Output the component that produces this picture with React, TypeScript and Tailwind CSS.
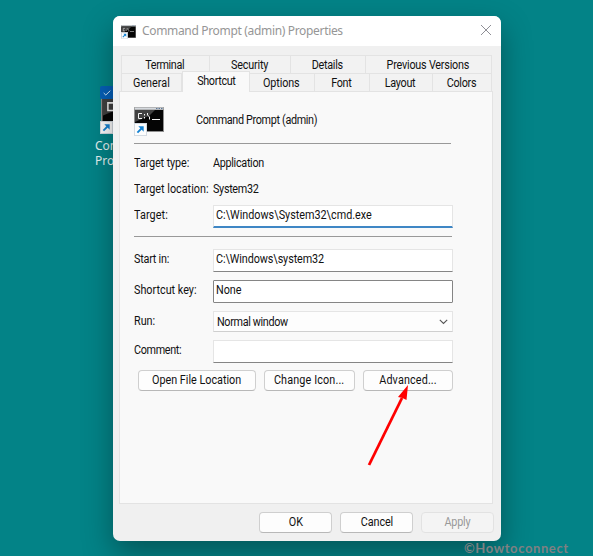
import type { ReactNode } from 'react';
import clsx from 'clsx';

type TabItem = { label: string; width: string; tracking: string };

const upperTabs: TabItem[] = [
  { label: 'Terminal', width: 'w-[88px]', tracking: 'tracking-[-0.38px]' },
  { label: 'Security', width: 'w-[81px]', tracking: 'tracking-[-0.2px]' },
  { label: 'Details', width: 'w-[75px]', tracking: 'tracking-[-0.3px]' },
  { label: 'Previous Versions', width: 'w-[126px]', tracking: 'tracking-[-0.24px]' },
];

const lowerTabs: TabItem[] = [
  { label: 'General', width: 'w-[60px]', tracking: 'tracking-normal' },
  { label: 'Shortcut', width: 'w-[68px]', tracking: 'tracking-[-0.38px]' },
  { label: 'Options', width: 'w-[65px]', tracking: 'tracking-[-0.15px]' },
  { label: 'Font', width: 'w-[55px]', tracking: 'tracking-[-0.35px]' },
  { label: 'Layout', width: 'w-[63px]', tracking: 'tracking-[-0.3px]' },
  { label: 'Colors', width: 'w-[59px]', tracking: 'tracking-[-0.3px]' },
];

// Slightly condensed interface text
function Text({ className, center, children }: { className?: string; center?: boolean; children: ReactNode }) {
  return (
    <span className={clsx('inline-block scale-x-90', center ? 'origin-center' : 'origin-left', className)}>
      {children}
    </span>
  );
}

function ShortcutArrow({ className }: { className?: string }) {
  return (
    <svg viewBox="0 0 13 13" className={className}>
      <rect x="0.5" y="0.5" width="12" height="12" fill="#fdfdfd" stroke="#d4dbe2" />
      <path d="M3.400 9.600 8 5" fill="none" stroke="#1482d2" strokeWidth="1.9" />
      <path d="M4.300 3.300h5.400v5.400z" fill="#1482d2" />
    </svg>
  );
}

function ConsoleIcon({ className }: { className?: string }) {
  return (
    <svg viewBox="0 0 30 25" preserveAspectRatio="none" className={className}>
      <rect width="30" height="25" rx="0.5" fill="#8f8f8f" />
      <rect x="0.7" y="0.5" width="28.6" height="2" fill="#d5d9de" />
      <path d="M22 1.5h1.5M24.5 1.5H26M27 1.5h1.5" stroke="#5d7796" />
      <rect x="1" y="3" width="28" height="21" fill="#050505" />
      <path d="M1 3h20L15 9 1 15z" fill="#414141" />
      <path
        d="M8 6.500H4.500v5H8M10.500 7v1.500M10.500 10v1.500M13.500 6v2l2 2v2.500M18 12.500h8"
        fill="none"
        stroke="#f4f4f4"
        strokeWidth="1"
      />
    </svg>
  );
}

function Tab({ label, width, tracking, active }: TabItem & { active?: boolean }) {
  return (
    <div
      className={clsx(
        'flex items-center justify-center border-r border-t border-[#e3e3e3]',
        width,
        active ? 'relative -mt-[2px] -mb-px h-[21px] border-l bg-[#f9f9f9] pb-[2px]' : 'h-[18px] bg-[#f2f2f2] pr-px',
      )}
    >
      <Text center className={tracking}>
        {label}
      </Text>
    </div>
  );
}

type RowProps = { label: string; className: string; tracking?: string; children: ReactNode };

function Row({ label, className, tracking, children }: RowProps) {
  return (
    <div className={clsx('flex', className)}>
      <span className="w-[79px] shrink-0">
        <Text className={tracking}>{label}</Text>
      </span>
      {children}
    </div>
  );
}

type ButtonProps = { className: string; tracking?: string; disabled?: boolean; children: ReactNode };

function Button({ className, tracking, disabled, children }: ButtonProps) {
  return (
    <button
      disabled={disabled}
      className={clsx(
        'h-[21px] rounded-[4px] border leading-[19px]',
        disabled ? 'border-[#e2e2e2] bg-[#f4f4f4] text-[#999]' : 'border-[#cfcfcf] border-b-[#b8b8b8] bg-[#fdfdfd]',
        className,
      )}
    >
      <Text center className={tracking}>
        {children}
      </Text>
    </button>
  );
}

const field = 'h-[23px] w-[240px] border pl-[2px] pt-px bg-white';

export default function App() {
  return (
    <div className="relative h-[556px] w-[593px] overflow-hidden bg-[#038387] font-[Roboto,sans-serif] text-[12px] leading-[16px] text-[#111] whitespace-nowrap">
      {/* Desktop shortcut, partly under the dialog */}
      <div className="absolute left-[95px] top-[86px] w-[60px] font-['Noto_Sans',sans-serif] text-[12px] leading-[15px] text-[#e5f2f2]">
        <div className="relative ml-[5px] h-[48px]">
          <ConsoleIcon className="absolute left-px top-[7px] h-[38px] w-[46px]" />
          <div className="absolute left-0 top-0 flex h-[13px] w-[14px] items-center justify-center rounded-[2px] bg-[#0560b8]">
            <svg viewBox="0 0 8 6" className="h-[6px] w-[8px]">
              <path d="m.7 3 2.1 2L7.3.7" fill="none" stroke="#d6ebff" />
            </svg>
          </div>
          <ShortcutArrow className="absolute left-0 top-[35px] size-[13px]" />
        </div>
        <p className="mt-[4px]">Com</p>
        <p>Pro</p>
      </div>

      {/* Properties dialog */}
      <div className="absolute left-[113px] top-[16px] h-[525px] w-[388px] overflow-hidden rounded-[7px] bg-[#f0f0f0] shadow-[0_12px_30px_rgba(0,0,0,0.35)]">
        <div className="flex h-[30px] items-center bg-white pl-[8px] pr-[9px]">
          <div className="relative h-[13px] w-[15px]">
            <ConsoleIcon className="h-[13px] w-[15px]" />
            <ShortcutArrow className="absolute -bottom-px left-0 size-[7px]" />
          </div>
          <h1 className="ml-[6px] font-['Noto_Sans',sans-serif] text-[12px] tracking-[-0.33px] text-[#969696]">
            Command Prompt (admin) Properties
          </h1>
          <svg viewBox="0 0 12 12" className="relative -top-px ml-auto size-[12px]">
            <path d="m1 1 10 10M11 1 1 11" stroke="#8f8f96" />
          </svg>
        </div>

        <div className="mt-[9px] ml-[8px] w-[371px]">
          <div className="flex border-l border-[#e3e3e3]">
            {upperTabs.map((tab) => (
              <Tab key={tab.label} {...tab} />
            ))}
          </div>
          <div className="flex h-[18px] border-l border-[#e3e3e3]">
            {lowerTabs.map((tab) => (
              <Tab key={tab.label} {...tab} active={tab.label === 'Shortcut'} />
            ))}
          </div>
        </div>

        <div className="ml-[6px] h-[413px] w-[374px] border border-[#e3e3e3] bg-[#f9f9f9] pl-[14px]">
          <div className="flex h-[52px] w-[317px] border-b border-[#999] pt-[15px]">
            <div className="relative h-[26px] w-[62px]">
              <ConsoleIcon className="h-[25px] w-[30px]" />
              <ShortcutArrow className="absolute left-0 top-[16px] size-[13px]" />
            </div>
            <Text className="mt-[5px] tracking-[-0.37px]">Command Prompt (admin)</Text>
          </div>
          <Row label="Target type:" className="mt-[11px]" tracking="tracking-[-0.1px]">
            <Text className="tracking-[-0.33px]">Application</Text>
          </Row>
          <Row label="Target location:" className="mt-[10px]">
            <Text className="tracking-[-0.35px]">System32</Text>
          </Row>
          <Row label="Target:" className="mt-[8px] h-[23px]" tracking="pt-[2px] tracking-[0.1px]">
            <div className={clsx(field, 'border-[#e5e5e5] border-b-2 border-b-[#3f87c5]')}>
              <Text>C:\Windows\System32\cmd.exe</Text>
            </div>
          </Row>
          <div className="mt-[8px] h-px w-[318px] bg-[#999]" />
          <Row label="Start in:" className="mt-[12px] h-[23px]" tracking="pt-[2px] tracking-[-0.25px]">
            <div className={clsx(field, 'border-[#e5e5e5] border-b-[#858585]')}>
              <Text className="tracking-[-0.1px]">C:\Windows\system32</Text>
            </div>
          </Row>
          <Row label="Shortcut key:" className="mt-[8px] h-[23px]" tracking="pt-[2px]">
            <div className={clsx(field, 'rounded-[1px] border-[#858585]')}>
              <Text>None</Text>
            </div>
          </Row>
          <Row label="Run:" className="mt-[8px] h-[21px]" tracking="pt-[2px]">
            <div className="flex h-[21px] w-[240px] items-center justify-between border border-[#e5e5e5] border-b-[#cfcfcf] bg-[#fdfdfd] pl-[3px] pr-[4px]">
              <Text className="tracking-[-0.38px]">Normal window</Text>
              <svg viewBox="0 0 9 6" className="h-[6px] w-[9px]">
                <path d="m.8.8 3.7 3.7L8.2.8" fill="none" stroke="#555" strokeWidth="1.1" />
              </svg>
            </div>
          </Row>
          <Row label="Comment:" className="mt-[8px] h-[23px]" tracking="pt-[2px] tracking-[-0.38px]">
            <div className={clsx(field, 'border-[#e5e5e5] border-b-[#858585]')} />
          </Row>
          <div className="mt-[7px] ml-[4px] flex gap-[8px]">
            <Button className="w-[118px]">Open File Location</Button>
            <Button className="w-[91px]" tracking="tracking-[0.15px]">
              Change Icon...
            </Button>
            <Button className="w-[90px]" tracking="tracking-[0.15px]">
              Advanced...
            </Button>
          </div>
        </div>

        <div className="mt-[8px] mr-[7px] flex justify-end gap-[8px]">
          <Button className="w-[73px]">OK</Button>
          <Button className="w-[73px]" tracking="tracking-[-0.1px]">
            Cancel
          </Button>
          <Button className="w-[73px]" tracking="tracking-[-0.2px]" disabled>
            Apply
          </Button>
        </div>
      </div>

      {/* Pointer to the Advanced button */}
      <svg viewBox="0 0 42 82" className="absolute left-[367px] top-[385px] h-[82px] w-[42px]">
        <path d="M2 80 35 13" fill="none" stroke="#f00" strokeWidth="2.8" />
        <path d="m41 0-10 12 4.500 1L39.500 15z" fill="#f00" />
      </svg>

      <div className="absolute left-[464px] top-[540px] font-[Lato,sans-serif] text-[13px] font-bold tracking-[0.6px] text-[#7f8082]">
        ©Howtoconnect
      </div>
    </div>
  );
}
